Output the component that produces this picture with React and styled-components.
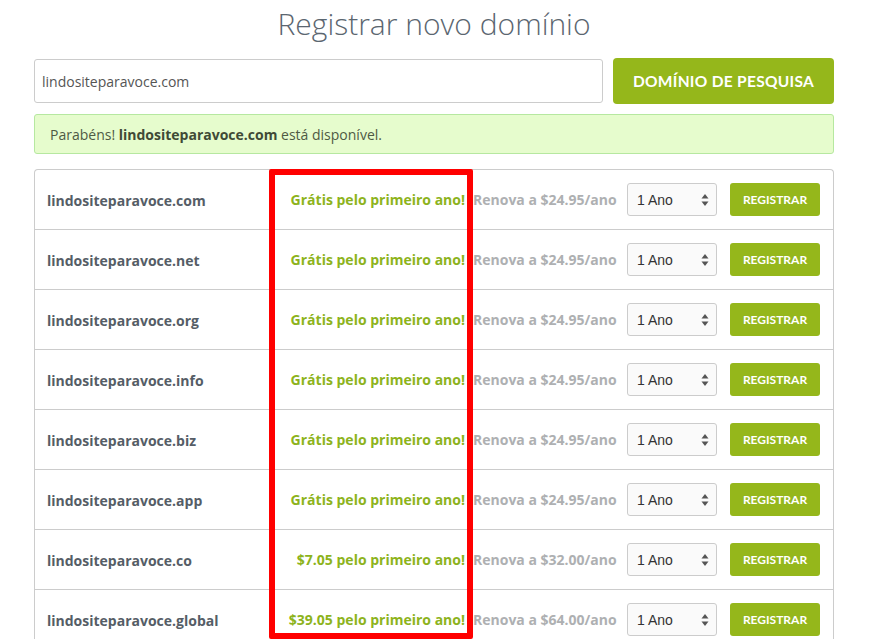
import React from "react";
import styled, { createGlobalStyle } from "styled-components";

const Global = createGlobalStyle`
  html, body { margin: 0; padding: 0; background: #fff; }
  body { font-family: "Open Sans", "Liberation Sans", sans-serif; color: #555; }
  * { box-sizing: border-box; }
`;

const Page = styled.div`
  width: 800px;
  margin-left: 34px;
  padding-top: 4px;
`;

const Title = styled.h1`
  margin: 0 0 14px;
  font-weight: 300;
  font-size: 30px;
  line-height: 40px;
  text-align: center;
  color: #5b6670;
`;

const SearchBar = styled.div`
  display: flex;
  align-items: center;
  gap: 10px;
`;

const SearchInput = styled.input`
  flex: 1;
  height: 44px;
  border: 1px solid #ccc;
  border-radius: 3px;
  padding: 0 7px;
  font-family: "Open Sans", sans-serif;
  font-size: 14px;
  color: #555;
  outline: none;
`;

const SearchButton = styled.button`
  width: 221px;
  height: 46px;
  border: none;
  border-radius: 4px;
  background: #95b71b;
  color: #fff;
  font-family: Lato, "Open Sans", sans-serif;
  font-weight: 700;
  font-size: 15.5px;
  letter-spacing: 0.3px;
  text-transform: uppercase;
`;

const Alert = styled.div`
  margin-top: 10px;
  height: 40px;
  display: flex;
  align-items: center;
  padding: 0 15px;
  background: #e6fccd;
  border: 1px solid #b6e8a0;
  border-radius: 3px;
  font-size: 14px;
  color: #4e5a44;
  b { font-weight: 700; color: #3f4a36; }
`;

const TableWrap = styled.div`
  position: relative;
  margin-top: 15px;
`;

const Table = styled.div`
  border: 1px solid #ccc;
  border-bottom: none;
  border-radius: 4px 4px 0 0;
`;

const Row = styled.div`
  display: grid;
  grid-template-columns: 1fr 200px 162px 90px 103px;
  align-items: center;
  height: 60px;
  padding: 0 13px 0 12px;
  border-bottom: 1px solid #ccc;
`;

const Domain = styled.div`
  font-weight: 700;
  font-size: 14px;
  color: #555d66;
  padding-top: 1px;
`;

const Price = styled.div`
  text-align: right;
  font-weight: 700;
  font-size: 14px;
  color: #8db31c;
`;

const Renew = styled.div`
  padding-left: 8px;
  font-weight: 700;
  font-size: 14px;
  color: #aeb0b2;
`;

const Select = styled.div`
  display: flex;
  align-items: center;
  justify-content: space-between;
  height: 33px;
  padding: 0 7px 0 9px;
  border: 1px solid #ccc;
  border-radius: 3px;
  background: #fafafa;
  font-family: "Liberation Sans", Arial, sans-serif;
  font-size: 14px;
  color: #333;
`;

const RegisterButton = styled.button`
  justify-self: end;
  width: 90px;
  height: 33px;
  border: none;
  border-radius: 3px;
  background: #95b71b;
  color: #fff;
  font-family: Lato, "Open Sans", sans-serif;
  font-weight: 700;
  font-size: 12px;
`;

const Highlight = styled.div`
  position: absolute;
  top: 0;
  left: 235px;
  width: 204px;
  height: 470px;
  border: 6px solid #ff0000;
  border-radius: 2px;
  pointer-events: none;
`;

const Arrows = () => (
  <svg width="8" height="14" viewBox="0 0 8 14">
    <path d="M4 1 L7.5 5.5 L0.5 5.5 Z" fill="#555" />
    <path d="M4 13 L7.5 8.5 L0.5 8.5 Z" fill="#555" />
  </svg>
);

const rows = [
  ["lindositeparavoce.com", "Grátis pelo primeiro ano!", "$24.95"],
  ["lindositeparavoce.net", "Grátis pelo primeiro ano!", "$24.95"],
  ["lindositeparavoce.org", "Grátis pelo primeiro ano!", "$24.95"],
  ["lindositeparavoce.info", "Grátis pelo primeiro ano!", "$24.95"],
  ["lindositeparavoce.biz", "Grátis pelo primeiro ano!", "$24.95"],
  ["lindositeparavoce.app", "Grátis pelo primeiro ano!", "$24.95"],
  ["lindositeparavoce.co", "$7.05 pelo primeiro ano!", "$32.00"],
  ["lindositeparavoce.global", "$39.05 pelo primeiro ano!", "$64.00"],
];

export default function App() {
  return (
    <Page>
      <Global />
      <Title>Registrar novo domínio</Title>
      <SearchBar>
        <SearchInput defaultValue="lindositeparavoce.com" />
        <SearchButton>Domínio de pesquisa</SearchButton>
      </SearchBar>
      <Alert>
        <span>
          Parabéns! <b>lindositeparavoce.com</b> está disponível.
        </span>
      </Alert>
      <TableWrap>
        <Table>
          {rows.map(([d, p, r]) => (
            <Row key={d}>
              <Domain>{d}</Domain>
              <Price>{p}</Price>
              <Renew>Renova a {r}/ano</Renew>
              <Select>
                <span>1 Ano</span>
                <Arrows />
              </Select>
              <RegisterButton>REGISTRAR</RegisterButton>
            </Row>
          ))}
        </Table>
        <Highlight />
      </TableWrap>
    </Page>
  );
}
